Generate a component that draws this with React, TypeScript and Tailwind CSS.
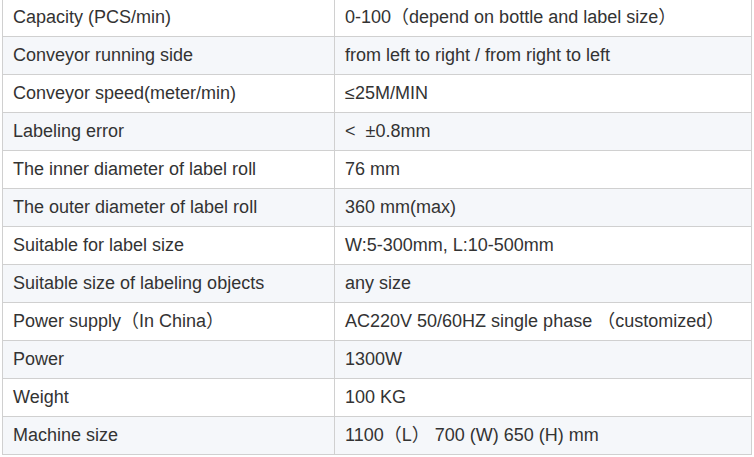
const rows: [string, string][] = [
  ['Capacity (PCS/min)', '0-100（depend on bottle and label size）'],
  ['Conveyor running side', 'from left to right / from right to left'],
  ['Conveyor speed(meter/min)', '≤25M/MIN'],
  ['Labeling error', '<  ±0.8mm'],
  ['The inner diameter of label roll', '76 mm'],
  ['The outer diameter of label roll', '360 mm(max)'],
  ['Suitable for label size', 'W:5-300mm, L:10-500mm'],
  ['Suitable size of labeling objects', 'any size'],
  ['Power supply（In China）', 'AC220V 50/60HZ single phase （customized）'],
  ['Power', '1300W'],
  ['Weight', '100 KG'],
  ['Machine size', '1100（L） 700 (W) 650 (H) mm'],
]

export default function App() {
  return (
    <div className="w-[754px] h-[457px] overflow-hidden bg-white">
      <table
        className="ml-[2px] -mt-[2px] w-[750px] border-collapse text-[18px] text-[#333]"
        style={{ fontFamily: '"Liberation Sans", Arial, "Noto Sans CJK SC", sans-serif' }}
      >
        <tbody>
          {rows.map(([k, v], i) => (
            <tr key={k} className={i % 2 === 1 ? 'bg-[#f5f7fa]' : 'bg-white'}>
              <td className="h-[38px] w-[332px] border border-[#d0d0d0] px-[10px] py-0 whitespace-pre">{k}</td>
              <td className="h-[38px] border border-[#d0d0d0] px-[10px] py-0 whitespace-pre">{v}</td>
            </tr>
          ))}
        </tbody>
      </table>
    </div>
  )
}
